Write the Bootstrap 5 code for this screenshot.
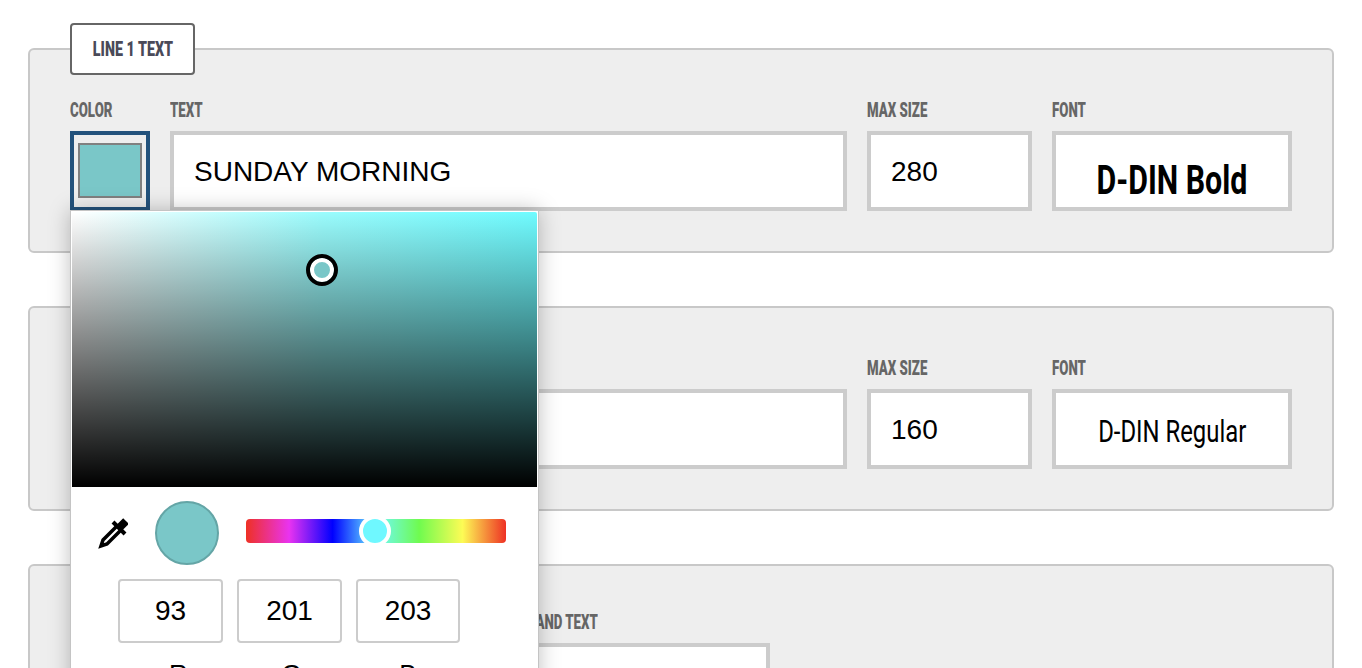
<!DOCTYPE html>
<html lang="en">
<head>
    <meta charset="UTF-8">
    <meta name="viewport" content="width=device-width, initial-scale=1.0">
    <title>Line Text Settings</title>
    <link rel="stylesheet" href="https://cdn.jsdelivr.net/npm/bootstrap@5.3.0/dist/css/bootstrap.min.css">
    <style>
        html, body {
            height: 668px;
            overflow: hidden;
        }
        body {
            background: #fff;
            font-family: "Liberation Sans", Arial, sans-serif;
            padding: 48px 28px 0;
        }
        /* no condensed DIN here: squeeze Roboto to its widths */
        .din {
            display: inline-block;
            font-family: Roboto, "Liberation Sans", sans-serif;
            white-space: nowrap;
        }
        .line-panel {
            position: relative;
            height: 205px;
            margin-bottom: 53px;
            padding: 53px 40px 0;
            background: #eee;
            border: 2px solid #c8c8c8;
            border-radius: 6px;
        }
        .panel-short {
            padding-top: 49px;
        }
        .line-tab {
            position: absolute;
            top: -27px;
            left: 40px;
            width: 125px;
            height: 52px;
            line-height: 48px;
            text-align: center;
            background: #fff;
            border: 2px solid #666;
            border-radius: 4px;
            color: #4a4a58;
            font-size: 21px;
        }
        .line-tab .din {
            font-weight: 900;
            transform: scaleX(.68);
        }
        .field-row {
            gap: 20px;
        }
        .field-label {
            display: block;
            height: 28px;
            margin: 0;
            color: #666;
            font-size: 19.5px;
            font-weight: 900;
            line-height: 16px;
            transform: scaleX(.68);
            transform-origin: left center;
        }
        .field-box {
            display: block;
            width: 100%;
            height: 80px;
            padding: 2px 20px 0;
            background: #fff;
            border: 4px solid #ccc;
            border-radius: 0;
            color: #000;
            font-size: 28px;
            outline: 0;
        }
        .field-color { width: 80px; }
        .field-text { width: 677px; }
        .field-size { width: 165px; }
        .field-font { width: 240px; }
        .field-wide { width: 308px; }
        .field-logo { width: 272px; }
        .font-bold, .font-regular {
            display: flex;
            align-items: center;
            justify-content: center;
            padding: 0;
        }
        .font-bold {
            padding-top: 20px;
            font-size: 41px;
        }
        .font-bold .din {
            font-weight: 700;
            transform: scaleX(.74);
        }
        .font-regular {
            padding-top: 7px;
            font-size: 31px;
        }
        .font-regular .din {
            transform: scaleX(.77);
        }
        .swatch-btn {
            height: 80px;
            padding: 8px 4px 9px;
            background: #eee;
            border: 4px solid #23527c;
        }
        .swatch-fill {
            height: 100%;
            background: #7ac7c8;
            border: 2px solid #808080;
        }
        .color-popup {
            position: absolute;
            top: 160px;
            left: 40px;
            z-index: 10;
            width: 469px;
            height: 520px;
            padding: 1px 1px 0;
            background: #fff;
            border: 1px solid #c4c4c4;
            box-shadow: 0 0 20px rgba(0, 0, 0, .25);
        }
        .sat-area {
            position: relative;
            height: 275px;
            border-radius: 2px 2px 0 0;
            background: linear-gradient(to top, #000, rgba(0, 0, 0, 0)), linear-gradient(to right, #fff, #9afcfd 54%, #6ffbff);
        }
        .sat-handle {
            position: absolute;
            top: 42px;
            left: 234px;
            width: 32px;
            height: 32px;
            background: #7ac7c8;
            border: 4px solid #000;
            border-radius: 50%;
            box-shadow: inset 0 0 0 4px #fff;
        }
        .picker-row {
            gap: 27px;
            margin: 14px 0 0 24px;
        }
        .dropper {
            flex: none;
        }
        .color-preview {
            flex: none;
            width: 64px;
            height: 64px;
            background: #7ac7c8;
            border: 2px solid #64a5a6;
            border-radius: 50%;
        }
        .hue-bar {
            position: relative;
            width: 260px;
            height: 24px;
            margin-top: -4px;
            border-radius: 4px;
            background: linear-gradient(to right, #ee3124, #e933f0 16.6%, #0000ff 33.3%, #6ff8ff 50%, #6ffb4f 66.6%, #fdfb55 83.3%, #ee3124);
        }
        .hue-handle {
            position: absolute;
            top: -4px;
            left: 113px;
            width: 32px;
            height: 32px;
            background: #6ff8ff;
            border: 4px solid #fff;
            border-radius: 50%;
        }
        .rgb-row {
            gap: 14px;
            margin: 14px 0 0 46px;
        }
        .rgb-col {
            width: 105px;
            text-align: center;
        }
        .rgb-col:last-child {
            width: 104px;
        }
        .rgb-box {
            height: 64px;
            line-height: 60px;
            border: 2px solid #ccc;
            border-radius: 4px;
            color: #000;
            font-size: 28px;
        }
        .rgb-name {
            margin-top: 15px;
            color: #000;
            font-size: 26px;
            line-height: 32px;
        }
    </style>
</head>
<body>

<div class="line-panel">
    <div class="line-tab"><span class="din">LINE 1 TEXT</span></div>
    <div class="d-flex field-row">
        <div class="field-color">
            <span class="din field-label">COLOR</span>
            <div class="swatch-btn"><div class="swatch-fill"></div></div>
        </div>
        <div class="field-text">
            <span class="din field-label">TEXT</span>
            <input class="field-box" type="text" value="SUNDAY MORNING">
        </div>
        <div class="field-size">
            <span class="din field-label">MAX SIZE</span>
            <input class="field-box" type="text" value="280">
        </div>
        <div class="field-font">
            <span class="din field-label">FONT</span>
            <div class="field-box font-bold"><span class="din">D-DIN Bold</span></div>
        </div>
    </div>

    <!-- Colour picker popup, open over the panels -->
    <div class="color-popup">
        <div class="sat-area"><div class="sat-handle"></div></div>
        <div class="d-flex align-items-center picker-row">
            <svg class="dropper" width="32" height="32" viewBox="-2 0 32 32">
                <path d="M18 10L5 23L3 29L9 27L22 14" fill="#fff" stroke="#000" stroke-width="3.5"/>
                <path d="M15 5L27 17" stroke="#000" stroke-width="4"/>
                <path d="M21 11L28 4" stroke="#000" stroke-width="8"/>
            </svg>
            <div class="color-preview"></div>
            <div class="hue-bar"><div class="hue-handle"></div></div>
        </div>
        <div class="d-flex rgb-row">
            <div class="rgb-col"><div class="rgb-box">93</div><div class="rgb-name ps-3">R</div></div>
            <div class="rgb-col"><div class="rgb-box">201</div><div class="rgb-name ps-1">G</div></div>
            <div class="rgb-col"><div class="rgb-box">203</div><div class="rgb-name">B</div></div>
        </div>
    </div>
</div>

<div class="line-panel">
    <div class="line-tab"><span class="din">LINE 2 TEXT</span></div>
    <div class="d-flex field-row">
        <div class="field-color">
            <span class="din field-label">COLOR</span>
            <div class="swatch-btn"><div class="swatch-fill"></div></div>
        </div>
        <div class="field-text">
            <span class="din field-label">TEXT</span>
            <input class="field-box" type="text" value="">
        </div>
        <div class="field-size">
            <span class="din field-label">MAX SIZE</span>
            <input class="field-box" type="text" value="160">
        </div>
        <div class="field-font">
            <span class="din field-label">FONT</span>
            <div class="field-box font-regular"><span class="din">D-DIN Regular</span></div>
        </div>
    </div>
</div>

<div class="line-panel panel-short">
    <div class="d-flex field-row">
        <div class="field-color">
            <span class="din field-label"></span>
            <div class="swatch-btn"><div class="swatch-fill"></div></div>
        </div>
        <div class="field-wide">
            <span class="din field-label"></span>
            <input class="field-box" type="text" value="">
        </div>
        <div class="field-logo">
            <span class="din field-label">LOGO AND TEXT</span>
            <input class="field-box" type="text" value="">
        </div>
    </div>
</div>

</body>
</html>
